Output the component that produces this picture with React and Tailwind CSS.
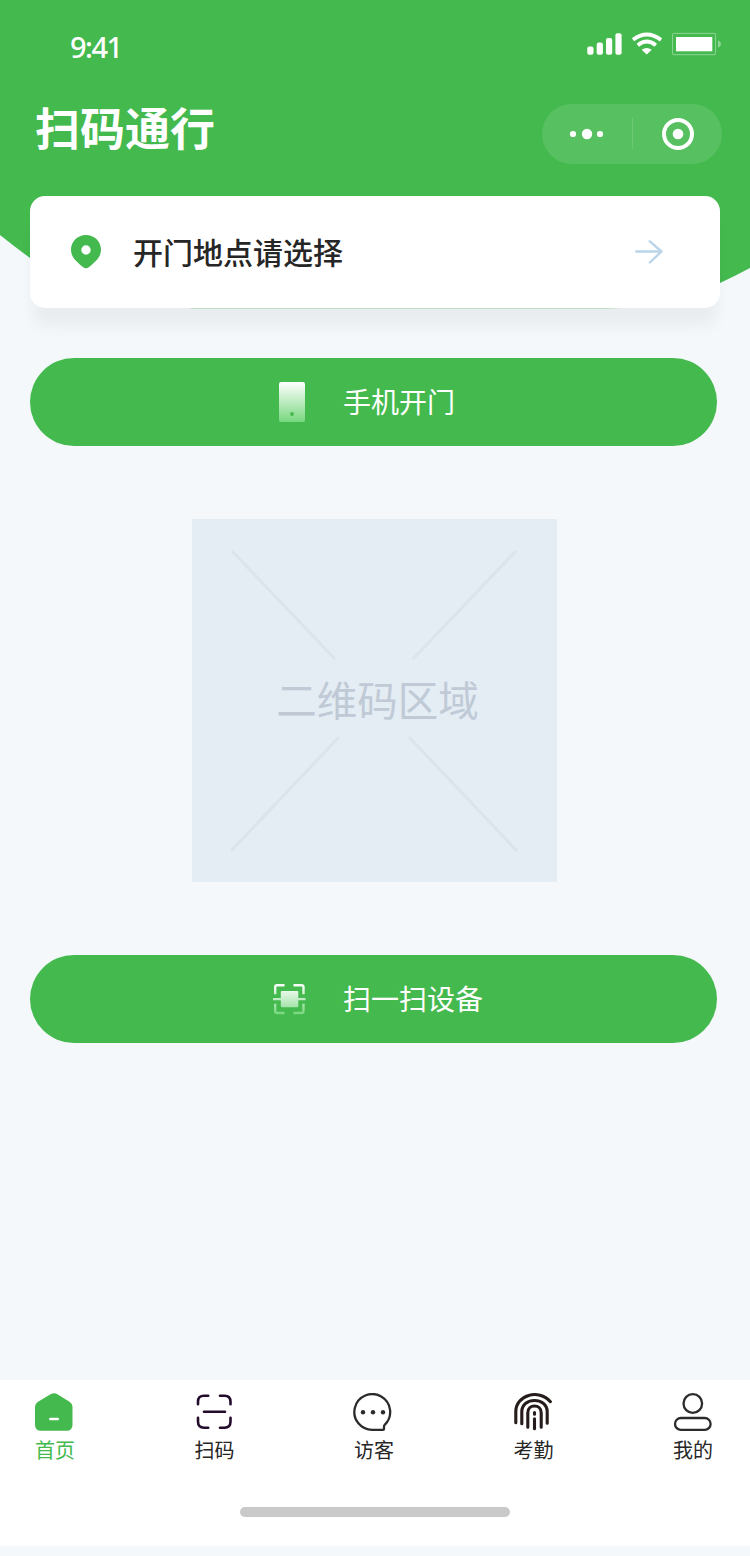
import React from "react";

function StatusIcons() {
  return (
    <svg className="block h-[26px] w-[136px]" viewBox="586 31 136 26" fill="none">
      <g fill="#fff">
        <rect x="587.3" y="46.5" width="6.2" height="8.3" rx="2" />
        <rect x="596.7" y="42.5" width="6.2" height="12.3" rx="2" />
        <rect x="606" y="38" width="6.2" height="16.8" rx="2" />
        <rect x="615.4" y="33.2" width="6.2" height="21.6" rx="2" />
        <path d="M641.6 49.800q5.100-3.800 10.200 0l-5.100 4.800z" />
        <rect x="676" y="37" width="36.3" height="14.3" />
      </g>
      <path d="M633 39.8q13.7-10.4 28 0" stroke="#fff" strokeWidth="3.9" />
      <path d="M637.8 45.200q9-7.400 18 0" stroke="#fff" strokeWidth="3.9" />
      <rect x="672.6" y="33.400" width="43" height="21.300" rx="1" stroke="#fff" strokeOpacity=".4" />
      <path d="M718 40.2q3 1.2 3 3.8t-3 3.8z" fill="#fff" fillOpacity=".4" />
    </svg>
  );
}

function Header() {
  return (
    <header className="relative h-[196px]">
      <svg className="absolute left-0 top-0 h-[310px] w-[750px]" viewBox="0 0 750 310">
        <path d="M0 0H750V268Q735 276 720 283Q660 308.300 608 308.300H192Q90 300 30 258Q15 247 0 235Z" fill="#44b94e" />
      </svg>
      <div className="relative flex h-[88px] items-center justify-between pl-[70px] pr-[28px]">
        <span className="pt-[5px] font-['Noto_Sans',sans-serif] text-[29px] font-medium leading-none tracking-[-1.500px] text-white">9:41</span>
        <StatusIcons />
      </div>
      <div className="relative flex items-start justify-between pl-[35px] pr-[28px] pt-4">
        <h1 className="-mt-[7px] text-[45px] font-bold leading-[60px] text-white">扫码通行</h1>
        <div className="flex h-[60px] w-[180px] items-center rounded-full bg-white/10">
          <svg className="block h-[60px] w-[180px]" viewBox="0 0 180 60" fill="none">
            <g fill="#fff">
              <circle cx="31" cy="30" r="3.1" />
              <circle cx="45" cy="30" r="5.2" />
              <circle cx="58" cy="30" r="3.1" />
              <circle cx="136" cy="30" r="5.3" />
            </g>
            <path d="M90.5 13.500V45" stroke="#fff" strokeOpacity=".14" />
            <circle cx="136" cy="30" r="14" stroke="#fff" strokeWidth="4" />
          </svg>
        </div>
      </div>
    </header>
  );
}

function LocationCard() {
  return (
    <button className="relative ml-[30px] flex h-[112px] w-[690px] items-center rounded-[15px] bg-white pl-[41px] pr-[57px] text-left shadow-[0_21px_14px_-3px_rgba(30,30,30,0.05)]">
      <svg className="block h-[34px] w-[30px]" viewBox="0 0 30 34">
        <path fillRule="evenodd" fill="#44b94e" d="M15 0C6.5 0 0 6.500 0 14.600C0 22.500 6 27 12.200 32.200Q15 34.300 17.800 32.200C24 27 30 22.500 30 14.600C30 6.500 23.500 0 15 0ZM15 10.300A4.700 4.700 0 1 1 15 19.700A4.700 4.700 0 1 1 15 10.300Z" />
      </svg>
      <span className="-mt-[3px] ml-[32px] text-[30px] font-medium leading-[40px] text-[#262626]">开门地点请选择</span>
      <svg className="ml-auto block h-[24px] w-[28px]" viewBox="0.500 0.500 28 24" fill="none" stroke="#bad4e8" strokeWidth="2.400" strokeLinecap="round" strokeLinejoin="round">
        <path d="M1.800 12H27M15.300 1.800L27 12L15.300 23" />
      </svg>
    </button>
  );
}

function PhoneIcon() {
  return (
    <svg className="ml-[8px] block h-[40px] w-[26px]" viewBox="0 0 26 40">
      <defs>
        <linearGradient id="phone" x1="0" y1="0" x2="0" y2="1">
          <stop stopColor="#fff" />
          <stop offset="1" stopColor="#78d77f" />
        </linearGradient>
      </defs>
      <rect width="26" height="40" rx="2" fill="url(#phone)" />
      <circle cx="13" cy="32" r="1.900" fill="#44b94e" />
    </svg>
  );
}

function DeviceScanIcon() {
  return (
    <svg className="ml-[1px] block h-[32px] w-[34px]" viewBox="0 0 34 32" fill="none">
      <defs>
        <linearGradient id="frame" gradientUnits="userSpaceOnUse" x1="0" y1="1" x2="0" y2="31">
          <stop stopColor="#fff" />
          <stop offset="1" stopColor="#78d77f" />
        </linearGradient>
        <linearGradient id="core" x1="0" y1="0" x2="0" y2="1">
          <stop stopColor="#e9f8ea" />
          <stop offset="1" stopColor="#a5e3aa" />
        </linearGradient>
      </defs>
      <path d="M3.200 11.200V4Q3.200 2.200 5 2.200H12.500M21.500 2.200H29.500Q31.500 2.200 31.500 4V11.200M31.500 20.800V28Q31.500 30 29.500 30H21.500M12.500 30H5Q3.200 30 3.200 28V20.800" stroke="url(#frame)" strokeWidth="2.400" />
      <path d="M1 15H33.500V17.200H1Z" fill="#c0ebc4" />
      <rect x="8.800" y="8" width="17.500" height="16.300" rx="1" fill="url(#core)" />
    </svg>
  );
}

function ActionButton({ icon, label }) {
  return (
    <button className="ml-[30px] flex h-[88px] w-[687px] shrink-0 items-center rounded-full bg-[#44b94e] pl-[241px]">
      <span className="flex w-[72px] items-center">{icon}</span>
      <span className="-mt-[2px] text-[28px] leading-[40px] text-white">{label}</span>
    </button>
  );
}

function QrArea() {
  return (
    <div className="ml-[192px] mt-[73px] grid h-[363px] w-[365px] place-items-center bg-[#e4ecf4]">
      <svg className="col-start-1 row-start-1 block h-[363px] w-[365px]" viewBox="0 0 365 363" fill="none" stroke="#dce4eb" strokeWidth="3">
        <path d="M40 32L143 140M324 32L221 140M147 218L39 332M217 218L325 332" />
      </svg>
      <span className="col-start-1 row-start-1 -mt-[4px] pl-[6px] text-[40.500px] leading-[54px] text-[#bfcad6]">二维码区域</span>
    </div>
  );
}

const icons = {
  home: (
    <>
      <path d="M17 1.300Q20 -.4 23 1.300L35.500 9Q38.500 11 38.500 14V32Q38.500 38 32.500 38H7Q1 38 1 32V14Q1 11 4 9Z" fill="#44b94e" />
      <path d="M16.300 26.300H23.700" stroke="#fff" strokeWidth="2.600" strokeLinecap="round" />
    </>
  ),
  scan: (
    <path d="M4 11.500V9Q4 3 10 3H14.200M26 3H30.500Q36.500 3 36.500 9V11.500M36.500 25V28.800Q36.500 35 30.500 35H26M14.200 35H10Q4 35 4 28.800V25M10 19H31" stroke="#230b2b" strokeWidth="2.600" strokeLinecap="round" />
  ),
  chat: (
    <>
      <path d="M31.700 32.200A17.900 17.900 0 1 0 20 37.200H30Q31 37.200 31 36.200V33.500Q31 32.700 31.700 32.200Z" stroke="#2b2b2b" strokeWidth="2.300" strokeLinejoin="round" />
      <g fill="#2b2b2b">
        <circle cx="10" cy="19.500" r="2.200" />
        <circle cx="20" cy="19.500" r="2.200" />
        <circle cx="30" cy="19.500" r="2.200" />
      </g>
    </>
  ),
  fingerprint: (
    <path d="M2.800 30V19C2.800 2.500 25.500 -4.500 37.400 9M8.800 31V19C8.800 4 34.200 4 34.200 19V30.500M14.800 34.500V20C14.800 11 28.200 11 28.200 20V34.500M21.500 19.800V21.500M21.500 26V36" stroke="#251c1b" strokeWidth="3.100" strokeLinecap="round" />
  ),
  user: (
    <g stroke="#2b2b2b" strokeWidth="2.300">
      <circle cx="20.800" cy="10.800" r="9.300" />
      <rect x="3" y="25.300" width="35.600" height="11.800" rx="5.900" />
    </g>
  ),
};

const tabs = [
  { id: "home", label: "首页", color: "text-[#44b94e]" },
  { id: "scan", label: "扫码", color: "text-[#262626]" },
  { id: "chat", label: "访客", color: "text-[#262626]" },
  { id: "fingerprint", label: "考勤", color: "text-[#262626]" },
  { id: "user", label: "我的", color: "text-[#262626]" },
];

function TabBar() {
  return (
    <nav className="mt-auto flex h-[166px] flex-col bg-white">
      <div className="flex justify-between pl-[34px] pr-[38px] pt-[13px]">
        {tabs.map((tab) => (
          <button key={tab.id} className={"flex w-[40px] flex-col items-center " + tab.color}>
            <svg className="block h-[40px] w-[40px]" viewBox="0 0.300 40 40" fill="none">{icons[tab.id]}</svg>
            <span className="ml-[2px] mt-[2px] whitespace-nowrap text-[20px] leading-[30px]">{tab.label}</span>
          </button>
        ))}
      </div>
      <div className="mx-auto mt-[42px] h-[10px] w-[270px] rounded-full bg-[#c9c9c9]" />
    </nav>
  );
}

export default function App() {
  return (
    <div className="flex h-[1556px] w-[750px] flex-col bg-[#f4f8fb] pb-[10px] font-['Noto_Sans_CJK_SC',sans-serif]">
      <Header />
      <LocationCard />
      <div className="mt-[50px] flex flex-col">
        <ActionButton icon={<PhoneIcon />} label="手机开门" />
        <QrArea />
        <div className="mt-[73px]">
          <ActionButton icon={<DeviceScanIcon />} label="扫一扫设备" />
        </div>
      </div>
      <TabBar />
    </div>
  );
}
